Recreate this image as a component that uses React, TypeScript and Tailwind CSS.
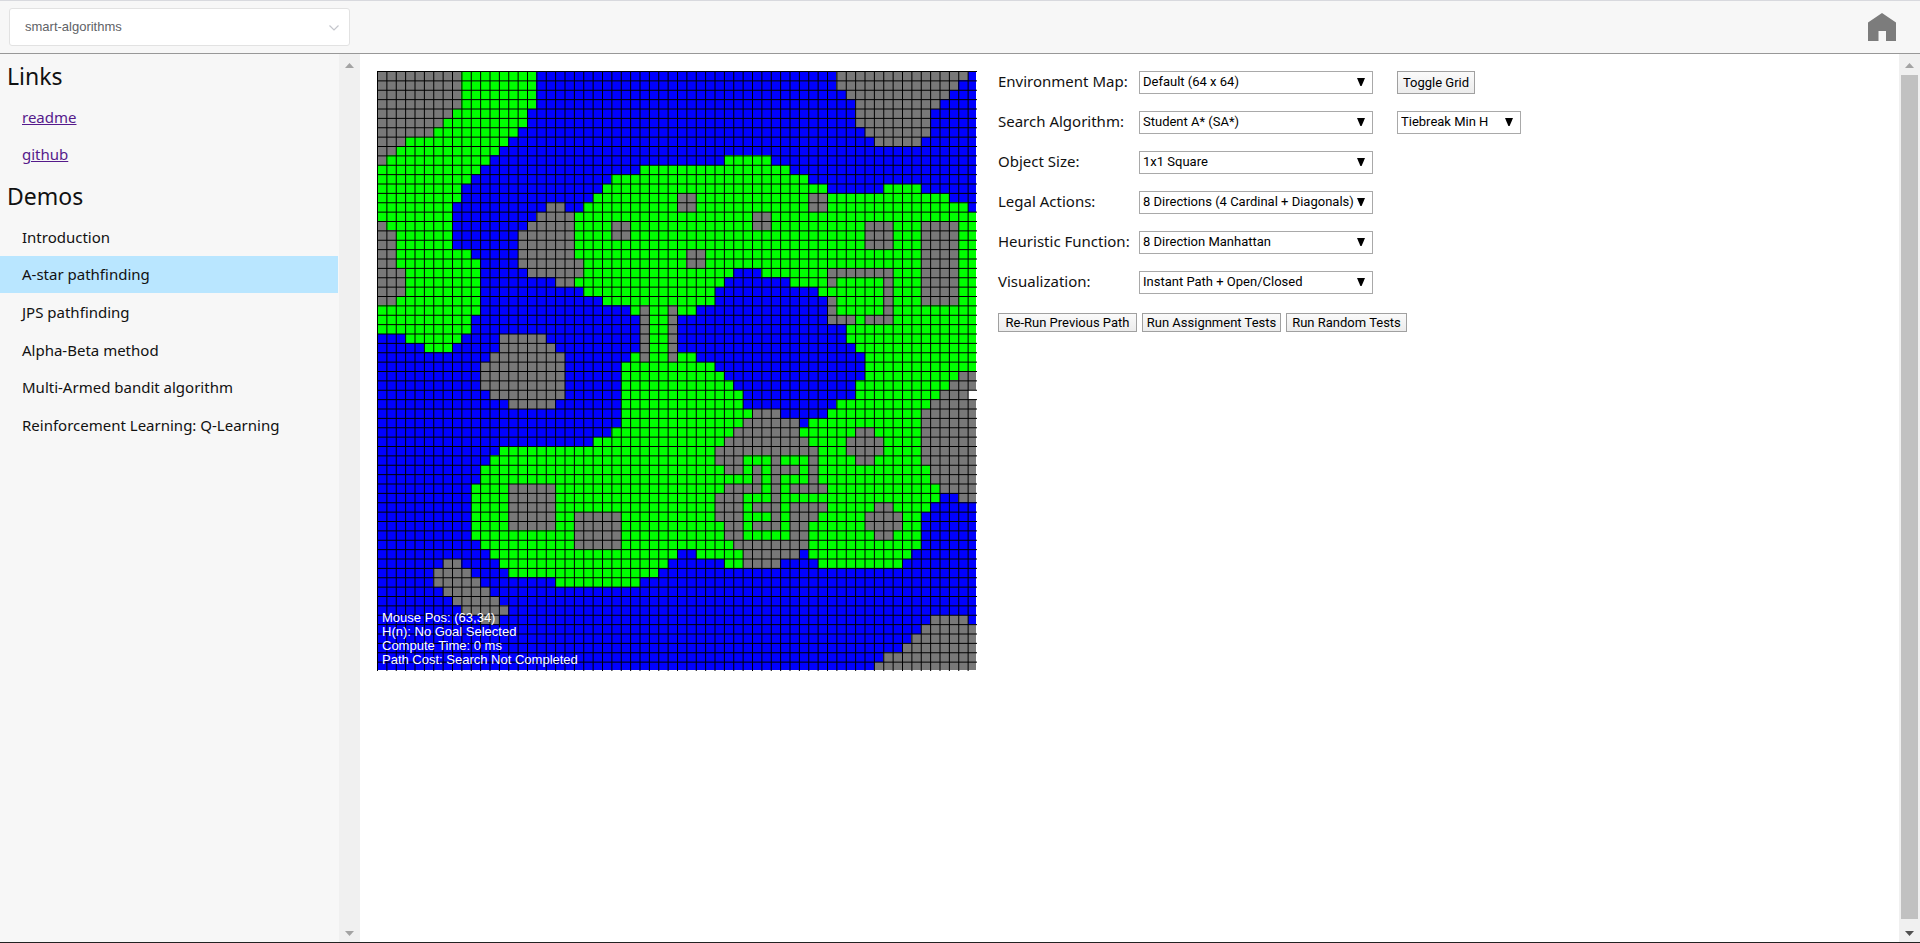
import { useState } from "react";
import type { ReactNode } from "react";

/* Each row is run-length encoded: x = mountain, g = grass, b = water, w = hovered tile. */
const MAP_ROWS = [
  "9x7g 1g15b 16b 1b14x1b",
  "9x7g 1g15b 16b 1b13x2b",
  "9x7g 1g15b 16b 2b11x3b",
  "9x7g 1g15b 16b 3b9x4b",
  "8x8g 16b 16b 3b8x5b",
  "7x9g 16b 16b 3b8x5b",
  "6x9g1b 16b 16b 4b7x5b",
  "3x11g2b 16b 16b 5b5x6b",
  "2x11g3b 16b 16b 16b",
  "1x11g4b 16b 5b5g6b 16b",
  "11g5b 12b4g 12g4b 16b",
  "10g6b 9b7g 14g2b 16b",
  "9g7b 8b8g 16g 6b4g6b",
  "9g7b 7b9g 2x12g2x 13g3b",
  "8g8b 2b2x2b10g 2x12g2x 15g1b",
  "8g8b 1b4x11g 8g2x6g 16g",
  "1x7g8b 5x4g2x5g 8g2x6g 4g3x3g4x2g",
  "2x6g7b1x 5x4g2x5g 16g 4g3x3g4x2g",
  "2x6g7b1x 5x11g 16g 4g3x3g4x2g",
  "2x8g5b1x 5x11g 1g2x13g 10g4x2g",
  "2x9g4b1x 6x10g 1g2x13g 10g4x2g",
  "3x8g5b 6x10g 6g3b7g 7x3g4x2g",
  "3x8g5b 3b2x11g 5g7b4g 1x5g1x3g4x2g",
  "3x8g5b 6b10g 4g11b1g 6g1x3g4x2g",
  "2x9g5b 8b8g 4g12b 1x5g1x3g4x2g",
  "11g5b 11b1g1x2g1x 2g14b 1x5g1x9g",
  "10g6b 12b1x2g1x 16b 3x1g3x9g",
  "10g6b 12b1x2g1x 16b 2b14g",
  "3b6g4b3x 2x10b1x2g1x 16b 2b14g",
  "5b3g5b3x 3x9b1x2g1x 16b 3b13g",
  "12b4x 4x7b1g1x2g1x 2g14b 4b12g",
  "11b5x 4x6b6g 4g12b 4b12g",
  "11b5x 4x6b6g 5g11b 4b10g2x",
  "11b5x 4x6b6g 6g10b 3b10g3x",
  "12b4x 4x6b6g 7g9b 3b9g3x1w",
  "14b2x 3x7b6g 7g9b 1b10g5x",
  "16b 10b6g 8g3x5b 10g6x",
  "16b 10b6g 7g6x1b2g 10g6x",
  "16b 9b7g 6g7x3g 3g2x5g6x",
  "16b 7b9g 5g9x2g 2g4x4g6x",
  "13b3g 16g 4g11x1g 2g4x4g6x",
  "12b4g 16g 4g3x3g1x3g1x1g 3g2x5g6x",
  "11b5g 16g 5g2x1g1x1g3x1g1x1g 11g5x",
  "11b5g 16g 8g1x1g1x3g1x1g 11g5x",
  "10b4g2x 3x13g 5g4x1g1x1g4x 12g4x",
  "10b4g2x 3x13g 4g3x3g1x5g 12g2b2x",
  "10b4g2x 3x13g 4g3x1g3x1g4x 5g2x4g5b",
  "10b4g2x 3x2g5x6g 4g3x3g1x1g3x1g 4g4x2g6b",
  "10b4g2x 3x2g5x6g 5g2x1g3x1g2x2g 4g4x2g6b",
  "10b6g 5g5x6g 5g2x5g2x2g 5g2x3g6b",
  "11b5g 5g5x6g 6g8x2g 10g6b",
  "12b4g 16g 2b5g6x1b2g 9g7b",
  "7b2x4b3g 15g1b 5b2g4x4b1g 8g8b",
  "6b4x4b2g 14g2b 16b 16b",
  "6b5x5b 3b9g4b 16b 16b",
  "7b5x4b 16b 16b 16b",
  "8b5x3b 16b 16b 16b",
  "9b5x2b 16b 16b 16b",
  "11b2x3b 16b 16b 11b4x1b",
  "16b 16b 16b 10b6x",
  "16b 16b 16b 9b7x",
  "16b 16b 16b 8b8x",
  "16b 16b 16b 6b10x",
  "16b 16b 16b 5b11x",
];

const TILE = 600 / 64;
const TILE_COLORS: Record<string, string> = {
  x: "#787878",
  g: "#00ff00",
  b: "#0000ff",
  w: "#ffffff",
};

const TILE_RUNS = MAP_ROWS.flatMap((row, y) => {
  let x = 0;
  return Array.from(row.matchAll(/(\d+)([xgbw])/g), ([, count, kind]) => {
    const run = { x, y, length: Number(count), kind };
    x += run.length;
    return run;
  });
});

const GRID_LINES = Array.from({ length: 64 }, (_, i) => i * TILE);

function GridMap({ showGrid }: { showGrid: boolean }) {
  return (
    <div className="relative shrink-0">
      <svg width="600" height="600" viewBox="0 0 600 600" role="img" aria-label="Grid map" className="block">
        <g shapeRendering="crispEdges">
          {TILE_RUNS.map((run) => (
            <rect
              key={`${run.x}-${run.y}`}
              x={run.x * TILE}
              y={run.y * TILE}
              width={Math.min(run.length * TILE, 599 - run.x * TILE)}
              height={Math.min(TILE, 599 - run.y * TILE)}
              fill={TILE_COLORS[run.kind]}
            />
          ))}
        </g>
        {showGrid &&
          GRID_LINES.map((p) => (
            <g key={p} fill="#000">
              <rect x={p} y="0" width="1" height="600" />
              <rect x="0" y={p} width="600" height="1" />
            </g>
          ))}
      </svg>
      <div className="absolute bottom-1 left-[5px] font-['Liberation_Sans',Arial,sans-serif] text-[13px] leading-[14px] text-white">
        <p>Mouse Pos: (63,34)</p>
        <p>H(n): No Goal Selected</p>
        <p>Compute Time: 0 ms</p>
        <p>Path Cost: Search Not Completed</p>
      </div>
    </div>
  );
}

function Dropdown({ id, label, options, className }: { id: string; label?: string; options: string[]; className: string }) {
  return (
    <span className={`relative block ${className}`}>
      <select
        id={id}
        aria-label={label}
        className="block h-[23px] w-full appearance-none border border-[#a9a9a9] bg-white pr-4 pb-[2px] pl-[3px] font-[Roboto,'Liberation_Sans',sans-serif] text-[13px] leading-[19px] text-black"
      >
        {options.map((o) => (
          <option key={o}>{o}</option>
        ))}
      </select>
      <svg viewBox="0 0 8 8" className="pointer-events-none absolute top-[7px] right-2 size-2" aria-hidden="true">
        <path d="M0 0H8L4.600 8H3.400Z" fill="#000" />
      </svg>
    </span>
  );
}

function PushButton({ children, onClick, className }: { children: ReactNode; onClick?: () => void; className: string }) {
  return (
    <button
      type="button"
      onClick={onClick}
      className={`border border-[#a0a0a0] bg-linear-to-b from-[#fafafa] to-[#ececec] font-[Roboto,'Liberation_Sans',sans-serif] text-[13px] whitespace-nowrap text-black ${className}`}
    >
      {children}
    </button>
  );
}

function ScrollTrack({ thumb, className }: { thumb?: boolean; className: string }) {
  return (
    <div aria-hidden="true" className={`flex shrink-0 flex-col items-center justify-between bg-[#f0f0f0] ${className}`}>
      <svg viewBox="0 0 9 5" className="mt-[9px] h-[5px] w-[9px] shrink-0">
        <path d="M0 5L4.5 0L9 5Z" fill="#a3a3a3" />
      </svg>
      {thumb && <div className="mt-[7px] mb-[12px] w-[17px] flex-1 bg-[#c1c1c1]" />}
      <svg viewBox="0 0 9 5" className="mb-[6px] h-[5px] w-[9px] shrink-0">
        <path d="M0 0L4.5 5L9 0Z" fill={thumb ? "#505050" : "#a3a3a3"} />
      </svg>
    </div>
  );
}

const SETTINGS = [
  { id: "map", label: "Environment Map:", options: ["Default (64 x 64)"] },
  { id: "algorithm", label: "Search Algorithm:", options: ["Student A* (SA*)"] },
  { id: "size", label: "Object Size:", options: ["1x1 Square"] },
  { id: "actions", label: "Legal Actions:", options: ["8 Directions (4 Cardinal + Diagonals)"] },
  { id: "heuristic", label: "Heuristic Function:", options: ["8 Direction Manhattan"] },
  { id: "visualization", label: "Visualization:", options: ["Instant Path + Open/Closed"] },
];

const DEMOS = [
  "Introduction",
  "A-star pathfinding",
  "JPS pathfinding",
  "Alpha-Beta method",
  "Multi-Armed bandit algorithm",
  "Reinforcement Learning: Q-Learning",
];

export default function App() {
  const [showGrid, setShowGrid] = useState(true);
  const [active, setActive] = useState("A-star pathfinding");

  return (
    <div className="flex h-screen flex-col border-b border-[#222] bg-white font-['Noto_Sans','Segoe_UI',sans-serif] text-[15px] text-[#111]">
      <header className="flex h-[54px] shrink-0 items-center justify-between border-t border-b border-t-[#d8d9de] border-b-[#989898] bg-[#f7f7f7] pr-6 pl-[9px]">
        <span className="relative block w-[341px]">
          <select
            aria-label="Project"
            className="block h-[38px] w-full appearance-none rounded-[3px] border border-[#e2e2e2] bg-white pl-[15px] font-['Liberation_Sans',Arial,sans-serif] text-[13px] text-[#606266]"
          >
            <option>smart-algorithms</option>
          </select>
          <svg viewBox="0 0 12 8" className="pointer-events-none absolute top-4 right-[10px] h-2 w-3" aria-hidden="true">
            <path d="M1.5 1.5L6 6L10.5 1.5" fill="none" stroke="#c4c6cc" strokeWidth="1.2" />
          </svg>
        </span>
        <a href="#home" aria-label="Home">
          <svg viewBox="0 0 28 28" className="block size-7">
            <path d="M14 0L28 9.5V28H18V18H10.500V28H0V9.500Z" fill="#7c7c7c" />
          </svg>
        </a>
      </header>

      <div className="flex min-h-0 flex-1">
        <nav className="flex w-[360px] shrink-0 bg-[#f7f7f7]">
          <div className="mr-px flex-1">
            <h2 className="flex h-11 items-center pl-[7px] text-[23px] leading-8">Links</h2>
            <ul className="grid h-[75px] grid-rows-2">
              {["readme", "github"].map((name) => (
                <li key={name} className="flex items-center pl-[22px]">
                  <a href={`#${name}`} className="text-[#551a8b] underline">{name}</a>
                </li>
              ))}
            </ul>
            <h2 className="flex h-[45px] items-center pl-[7px] text-[23px] leading-8">Demos</h2>
            <ul className="grid h-[226px] grid-rows-6">
              {DEMOS.map((name) => (
                <li key={name} className="flex">
                  <button
                    type="button"
                    onClick={() => setActive(name)}
                    className={`w-full pl-[22px] text-left ${name === active ? "bg-[#b9e6ff]" : ""}`}
                  >
                    {name}
                  </button>
                </li>
              ))}
            </ul>
          </div>
          <ScrollTrack className="w-[21px]" />
        </nav>

        <main className="flex min-w-0 flex-1 items-start gap-[21px] overflow-hidden pt-[17px] pl-[17px]">
          <GridMap showGrid={showGrid} />
          <div>
            <div className="flex flex-col gap-[17px]">
              {SETTINGS.map((s) => (
                <div key={s.id} className="flex h-[23px] items-center">
                  <label htmlFor={s.id} className="w-[141px] pb-[2px] whitespace-nowrap">{s.label}</label>
                  <Dropdown id={s.id} options={s.options} className="mr-6 w-[234px]" />
                  {s.id === "map" && (
                    <PushButton onClick={() => setShowGrid(!showGrid)} className="h-[23px] w-[78px]">
                      Toggle Grid
                    </PushButton>
                  )}
                  {s.id === "algorithm" && (
                    <Dropdown id="tiebreak" label="Tiebreak" options={["Tiebreak Min H"]} className="w-[124px]" />
                  )}
                </div>
              ))}
            </div>
            <div className="mt-[19px] flex gap-[5px]">
              <PushButton className="h-[19px] w-[139px] leading-[15px]">Re-Run Previous Path</PushButton>
              <PushButton className="h-[19px] w-[139px] leading-[15px]">Run Assignment Tests</PushButton>
              <PushButton className="h-[19px] w-[121px] leading-[15px]">Run Random Tests</PushButton>
            </div>
          </div>
        </main>
        <ScrollTrack thumb className="w-[21px]" />
      </div>
    </div>
  );
}
